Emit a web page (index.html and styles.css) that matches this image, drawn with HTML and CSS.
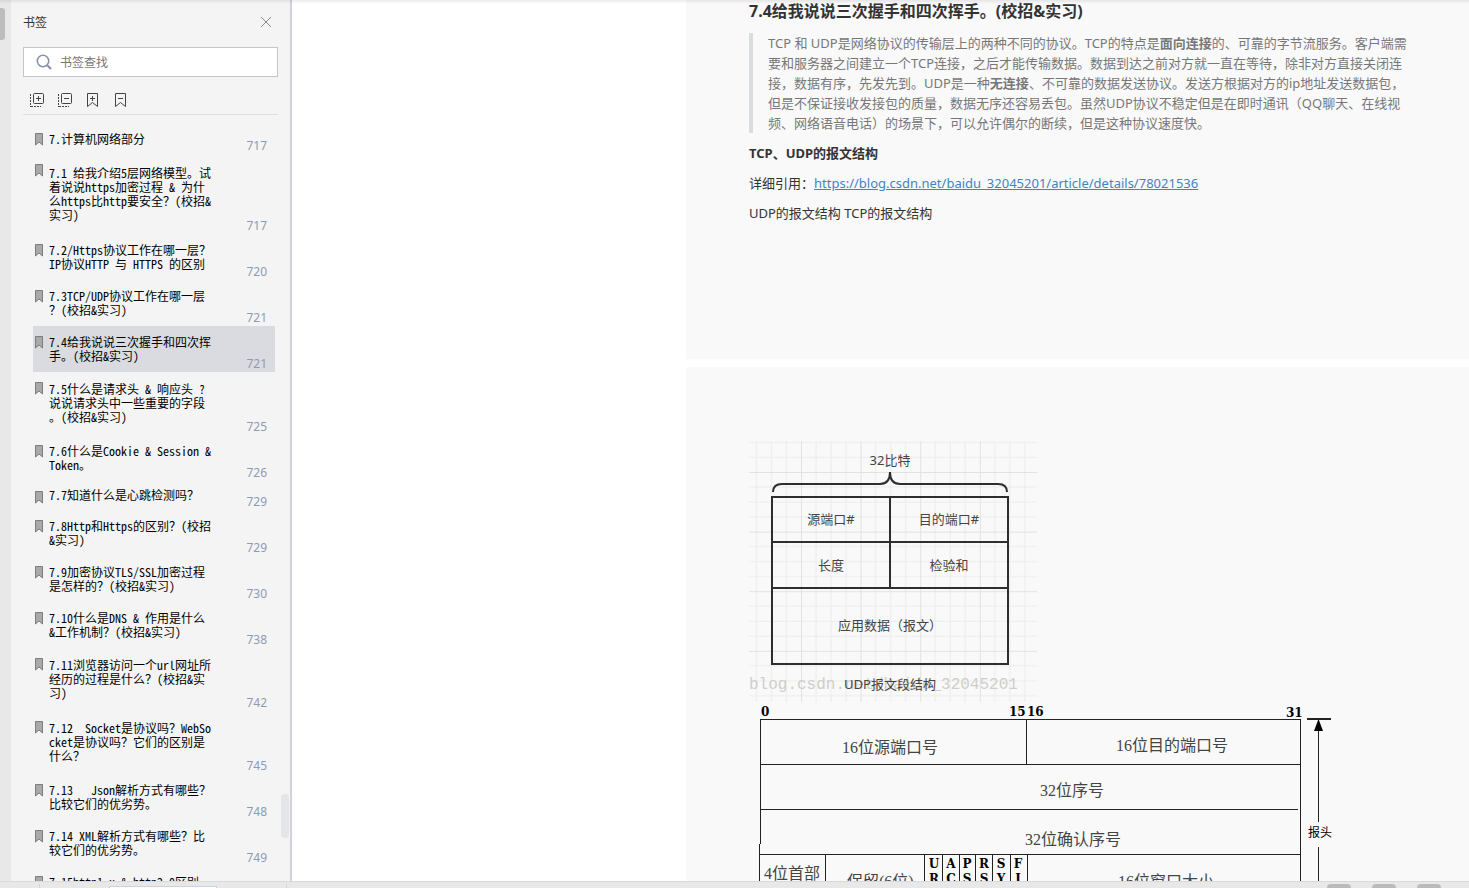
FILE: index.html
```html
<!DOCTYPE html>
<html lang="zh-CN">

<head>
  <meta charset="UTF-8" />
  <meta name="viewport" content="width=device-width, initial-scale=1.0" />
  <title>书签</title>
  <link rel="stylesheet" href="styles.css">
</head>

<body>
  <!-- 公用图标 -->
  <svg class="defs" aria-hidden="true">
    <symbol id="mark" viewBox="0 0 8 13">
      <path d="M0.5 0.5H7.5V12L4 9L0.5 12Z" fill="#a9a9a9" stroke="#7d7d7d" />
    </symbol>
  </svg>

  <div class="workspace">
    <div class="rail"><div class="rail-handle"></div></div>

    <aside class="sidebar">
      <div class="sidebar-header">
        <span>书签</span>
        <button class="icon-button" aria-label="关闭">
          <svg width="12" height="12" viewBox="0 0 12 12"><path d="M1 1L11 11M11 1L1 11" fill="none" stroke="#8c8c8c" /></svg>
        </button>
      </div>

      <label class="search">
        <svg width="16" height="16" viewBox="0 0 16 16" fill="none" stroke="#8492a6" stroke-width="1.6">
          <circle cx="7" cy="7" r="5.7" /><path d="M11.2 11.2L15 15" stroke-width="2" />
        </svg>
        <input type="text" placeholder="书签查找" aria-label="书签查找" />
      </label>

      <div class="toolbar">
        <button class="icon-button" aria-label="全部展开">
          <svg width="14" height="14" viewBox="0 0 14 14" fill="none" stroke="#444">
            <rect x="3.5" y="0.5" width="10" height="10" rx="1" /><path d="M6 5.5H11M8.5 3V8" />
            <path d="M0.5 1V14M1 13.5H11" stroke-dasharray="2 1" />
          </svg>
        </button>
        <button class="icon-button" aria-label="全部收起">
          <svg width="14" height="14" viewBox="0 0 14 14" fill="none" stroke="#444">
            <rect x="3.5" y="0.5" width="10" height="10" rx="1" /><path d="M6 5.5H11" />
            <path d="M0.5 1V14M1 13.5H11" stroke-dasharray="2 1" />
          </svg>
        </button>
        <button class="icon-button" aria-label="添加书签">
          <svg width="12" height="14" viewBox="0 0 12 14" fill="none" stroke="#444">
            <path d="M1.5 0.5H11.5V13.5L6.5 9.5L1.5 13.5ZM4 5.5H9M6.5 3V8" />
          </svg>
        </button>
        <button class="icon-button" aria-label="删除书签">
          <svg width="12" height="14" viewBox="0 0 12 14" fill="none" stroke="#444">
            <path d="M1.5 0.5H11.5V13.5L6.5 9.5L1.5 13.5ZM4 5.5H9" />
          </svg>
        </button>
      </div>

      <ul class="bookmarks">
        <li class="bookmark short chapter"><svg><use href="#mark" /></svg><p>7.计算机网络部分</p><span>717</span></li>
        <li class="bookmark longer"><svg><use href="#mark" /></svg><p>7.1 给我介绍5层网络模型。试<br>着说说https加密过程 &amp; 为什<br>么https比http要安全？(校招&amp;<br>实习)</p><span>717</span></li>
        <li class="bookmark"><svg><use href="#mark" /></svg><p>7.2/Https协议工作在哪一层？<br>IP协议HTTP 与 HTTPS 的区别</p><span>720</span></li>
        <li class="bookmark"><svg><use href="#mark" /></svg><p>7.3TCP/UDP协议工作在哪一层<br>？(校招&amp;实习)</p><span>721</span></li>
        <li class="bookmark selected"><svg><use href="#mark" /></svg><p>7.4给我说说三次握手和四次挥<br>手。(校招&amp;实习)</p><span>721</span></li>
        <li class="bookmark long"><svg><use href="#mark" /></svg><p>7.5什么是请求头 &amp; 响应头 ?<br>说说请求头中一些重要的字段<br>。(校招&amp;实习)</p><span>725</span></li>
        <li class="bookmark"><svg><use href="#mark" /></svg><p>7.6什么是Cookie &amp; Session &amp;<br>Token。</p><span>726</span></li>
        <li class="bookmark short"><svg><use href="#mark" /></svg><p>7.7知道什么是心跳检测吗？</p><span>729</span></li>
        <li class="bookmark"><svg><use href="#mark" /></svg><p>7.8Http和Https的区别？(校招<br>&amp;实习)</p><span>729</span></li>
        <li class="bookmark"><svg><use href="#mark" /></svg><p>7.9加密协议TLS/SSL加密过程<br>是怎样的？(校招&amp;实习)</p><span>730</span></li>
        <li class="bookmark"><svg><use href="#mark" /></svg><p>7.10什么是DNS &amp; 作用是什么<br>&amp;工作机制？(校招&amp;实习)</p><span>738</span></li>
        <li class="bookmark long"><svg><use href="#mark" /></svg><p>7.11浏览器访问一个url网址所<br>经历的过程是什么？(校招&amp;实<br>习)</p><span>742</span></li>
        <li class="bookmark long"><svg><use href="#mark" /></svg><p>7.12  Socket是协议吗？WebSo<br>cket是协议吗？它们的区别是<br>什么？</p><span>745</span></li>
        <li class="bookmark"><svg><use href="#mark" /></svg><p>7.13   Json解析方式有哪些？<br>比较它们的优劣势。</p><span>748</span></li>
        <li class="bookmark"><svg><use href="#mark" /></svg><p>7.14 XML解析方式有哪些？比<br>较它们的优劣势。</p><span>749</span></li>
        <li class="bookmark"><svg><use href="#mark" /></svg><p>7.15http1.x &amp; http2.0区别</p></li>
      </ul>
      <div class="scroll-thumb"></div>
    </aside>

    <main class="viewer">
      <article class="page first">
        <h1>7.4给我说说三次握手和四次挥手。(校招&amp;实习)</h1>
        <blockquote>
          TCP 和 UDP是网络协议的传输层上的两种不同的协议。TCP的特点是<b>面向连接</b>的、可靠的字节流服务。客户端需<br>要和服务器之间建立一个TCP连接，之后才能传输数据。数据到达之前对方就一直在等待，除非对方直接关闭连<br>接，数据有序，先发先到。UDP是一种<b>无连接</b>、不可靠的数据发送协议。发送方根据对方的ip地址发送数据包，<br>但是不保证接收发接包的质量，数据无序还容易丢包。虽然UDP协议不稳定但是在即时通讯（QQ聊天、在线视<br>频、网络语音电话）的场景下，可以允许偶尔的断续，但是这种协议速度快。
        </blockquote>
        <p><b>TCP、UDP的报文结构</b></p>
        <p>详细引用：<a href="https://blog.csdn.net/baidu_32045201/article/details/78021536">https://blog.csdn.net/baidu_32045201/article/details/78021536</a></p>
        <p>UDP的报文结构 TCP的报文结构</p>
      </article>

      <article class="page second">
        <!-- UDP 报文 -->
        <svg class="figure udp" width="288" height="261" viewBox="0 0 288 261">
          <defs>
            <pattern id="grid" x="52" y="31" width="59.6" height="59.6" patternUnits="userSpaceOnUse">
              <path d="M15 0V60M30 0V60M45 0V60M0 15H60M0 30H60M0 45H60" stroke="#ececec" fill="none" />
              <path d="M0.5 0V60M0 0.5H60" stroke="#e2e2e2" fill="none" />
            </pattern>
          </defs>
          <rect width="288" height="261" fill="url(#grid)" />
          <g fill="none" stroke="#2e2e2e" stroke-width="2">
            <path d="M24 51C24 46 26 43 33 43H131C138 43 141 39 141 31C141 39 144 43 151 43H249C256 43 258 46 258 51" />
            <path d="M23 56H259V223H23ZM23 101H259M23 147H259M141 56V147" />
          </g>
          <text class="watermark" x="0" y="248">blog.csdn.net/baidu_32045201</text>
          <g class="udp-labels">
            <text x="141" y="24">32比特</text>
            <text x="82" y="83">源端口#</text>
            <text x="200" y="83">目的端口#</text>
            <text x="82" y="129">长度</text>
            <text x="200" y="129">检验和</text>
            <text x="141" y="189">应用数据（报文）</text>
            <text x="141" y="248">UDP报文段结构</text>
          </g>
        </svg>

        <!-- TCP 报文 -->
        <svg class="figure" width="590" height="230" viewBox="0 0 590 230">
          <g fill="none" stroke="#222">
            <path d="M11 17.5H552M11.5 17V142M10.5 142V230M277.5 17V62M551.5 17V230" />
            <path d="M11 62.5H551M11 107.5H549M10 152.5H551" />
            <path d="M76.5 152V230M175.5 152V230M193.5 152V230M210.5 152V230M226.5 152V230M243.5 152V230M261.5 152V230M278.5 152V230" />
            <path d="M558 17H582" stroke-width="2" />
            <path d="M569.5 17V120M569.5 145V230" />
          </g>
          <path d="M569.5 17L574 29H565Z" fill="#000" />
          <g class="tcp-bits">
            <text x="12" y="14">0</text>
            <text x="260" y="14">15</text>
            <text x="278" y="14">16</text>
            <text x="537" y="15">31</text>
          </g>
          <g class="tcp-labels">
            <text x="93" y="51">16位源端口号</text>
            <text x="367" y="49">16位目的端口号</text>
            <text x="291" y="94">32位序号</text>
            <text x="276" y="143">32位确认序号</text>
            <text x="15" y="177">4位首部</text>
            <text x="98" y="185">保留(6位)</text>
            <text x="369" y="185">16位窗口大小</text>
          </g>
          <g class="tcp-flags">
            <text x="185" y="166">U</text><text x="185" y="181">R</text>
            <text x="202" y="166">A</text><text x="202" y="181">C</text>
            <text x="218" y="166">P</text><text x="218" y="181">S</text>
            <text x="235" y="166">R</text><text x="235" y="181">S</text>
            <text x="252" y="166">S</text><text x="252" y="181">Y</text>
            <text x="269" y="166">F</text><text x="269" y="181">I</text>
          </g>
          <text class="tcp-side" x="559" y="135">报头</text>
        </svg>
      </article>
    </main>
  </div>

  <footer class="statusbar">
    <div class="page-box"></div>
    <div class="status-tools"><i></i><i></i><i></i></div>
  </footer>
</body>

</html>
```

FILE: styles.css
```css
* {
  box-sizing: border-box;
}

body {
  margin: 0;
  height: 100vh;
  display: flex;
  flex-direction: column;
  overflow: hidden;
  font-family: "Noto Sans", "Noto Sans CJK SC", sans-serif;
  font-size: 13px;
  color: #333;
  background-color: #fff;
}

.defs {
  position: absolute;
  width: 0;
  height: 0;
}

.workspace {
  flex: 1;
  min-height: 0;
  display: flex;
  position: relative;
}

/* 顶部阴影 */
.workspace::before {
  content: "";
  position: absolute;
  top: 0;
  left: 0;
  right: 0;
  height: 4px;
  z-index: 1;
  background: linear-gradient(rgba(0, 0, 0, 0.08), rgba(0, 0, 0, 0));
}

.rail {
  flex: none;
  width: 11px;
  padding-top: 8px;
  background-color: #e8e8e8;
}

.rail-handle {
  width: 5px;
  height: 32px;
  border-radius: 0 3px 3px 0;
  background-color: #bdbdbd;
}

.sidebar {
  flex: none;
  position: relative;
  width: 281px;
  padding: 12px 12px 0;
  overflow: hidden;
  border-right: 2px solid #d2d2da;
  background-color: #f4f4f4;
  font-size: 12px;
}

.sidebar-header {
  display: flex;
  justify-content: space-between;
  align-items: center;
  height: 20px;
  padding-right: 6px;
}

.icon-button {
  display: flex;
  padding: 0;
  border: none;
  background: none;
}

.search {
  display: flex;
  align-items: center;
  gap: 8px;
  width: 255px;
  height: 30px;
  margin-top: 15px;
  padding-left: 12px;
  border: 1px solid #c3c6cf;
  background-color: #fff;
}

.search input {
  flex: 1;
  min-width: 0;
  padding: 0;
  border: none;
  outline: none;
  font: inherit;
}

.search input::placeholder {
  color: #777;
}

.toolbar {
  display: flex;
  gap: 14px;
  width: 255px;
  height: 38px;
  padding: 16px 7px 0;
  border-bottom: 1px solid #dedfe2;
}

.toolbar .icon-button {
  width: 14px;
  height: 14px;
}

.bookmarks {
  list-style: none;
  width: 242px;
  margin: 10px 0 0 10px;
  padding: 0;
}

.bookmark {
  display: flex;
  position: relative;
  padding: 9px 8px 9px 2px;
}

.bookmark.short {
  padding-top: 7px;
  padding-bottom: 8px;
}

.bookmark.long {
  padding-top: 10px;
  padding-bottom: 11px;
}

.bookmark.longer {
  padding-top: 12px;
  padding-bottom: 12px;
}

.bookmark.selected {
  background-color: #dadbe0;
}

.bookmark svg {
  position: absolute;
  top: 10px;
  left: 2px;
  width: 8px;
  height: 13px;
}

.bookmark.chapter svg {
  top: 8px;
}

.bookmark p {
  flex: 1;
  margin: 0 0 0 14px;
  line-height: 14px;
  white-space: pre;
  color: #000;
  font-family: "Noto Sans Mono CJK SC", "Liberation Serif", "Noto Sans CJK SC", monospace;
}

.bookmark span {
  position: absolute;
  right: 8px;
  bottom: 0;
  line-height: 16px;
  color: #8c9bb5;
}

.scroll-thumb {
  position: absolute;
  right: 1px;
  bottom: 43px;
  width: 8px;
  height: 44px;
  border-radius: 4px;
  background-color: #e4e5e9;
}

.viewer {
  flex: 1;
  min-width: 0;
  padding-left: 394px;
  overflow: hidden;
}

.page {
  padding: 0 63px;
  white-space: nowrap;
  background-color: #f9f9f9;
}

.page.first {
  padding-bottom: 136px;
}

.page.second {
  min-height: 100%;
  margin-top: 8px;
  padding-top: 74px;
}

.page h1 {
  margin: 0;
  font-size: 16px;
  line-height: 22px;
}

.page p {
  margin: 10px 0 0;
  line-height: 20px;
}

.page a {
  color: #4183c4;
}

.page blockquote {
  margin: 11px 0 0;
  padding-left: 15px;
  border-left: 4px solid #dadde0;
  line-height: 20px;
  color: #777;
}

.figure {
  display: block;
}

.watermark {
  font-family: "Liberation Mono", monospace;
  font-size: 16px;
  fill: #cfcfc8;
}

.udp-labels {
  font-size: 13px;
  fill: #444;
  text-anchor: middle;
}

.tcp-bits,
.tcp-flags {
  font-family: "DejaVu Serif", serif;
  font-size: 12px;
  font-weight: bold;
  fill: #000;
}

.tcp-flags {
  text-anchor: middle;
}

.tcp-labels {
  font-family: "Liberation Serif", "Noto Sans CJK SC", serif;
  font-size: 16px;
  fill: #444;
}

.tcp-side {
  font-size: 12px;
  fill: #000;
}

.statusbar {
  flex: none;
  display: flex;
  justify-content: space-between;
  height: 7px;
  padding: 2px 28px 0 39px;
  overflow: hidden;
  border-top: 1px solid #d9d9d9;
  background-color: #e8e8e8;
}

.page-box {
  width: 248px;
  padding: 2px 69px 0;
  border-left: 1px solid #d5d5d5;
  border-right: 1px solid #d5d5d5;
}

.page-box::before {
  content: "";
  display: block;
  height: 8px;
  border: 1px solid #ccd3e0;
  background-color: #fff;
}

.status-tools {
  display: flex;
  gap: 21px;
}

.status-tools i {
  width: 24px;
  height: 12px;
  border-radius: 4px;
  background-color: #bbb;
}
```
